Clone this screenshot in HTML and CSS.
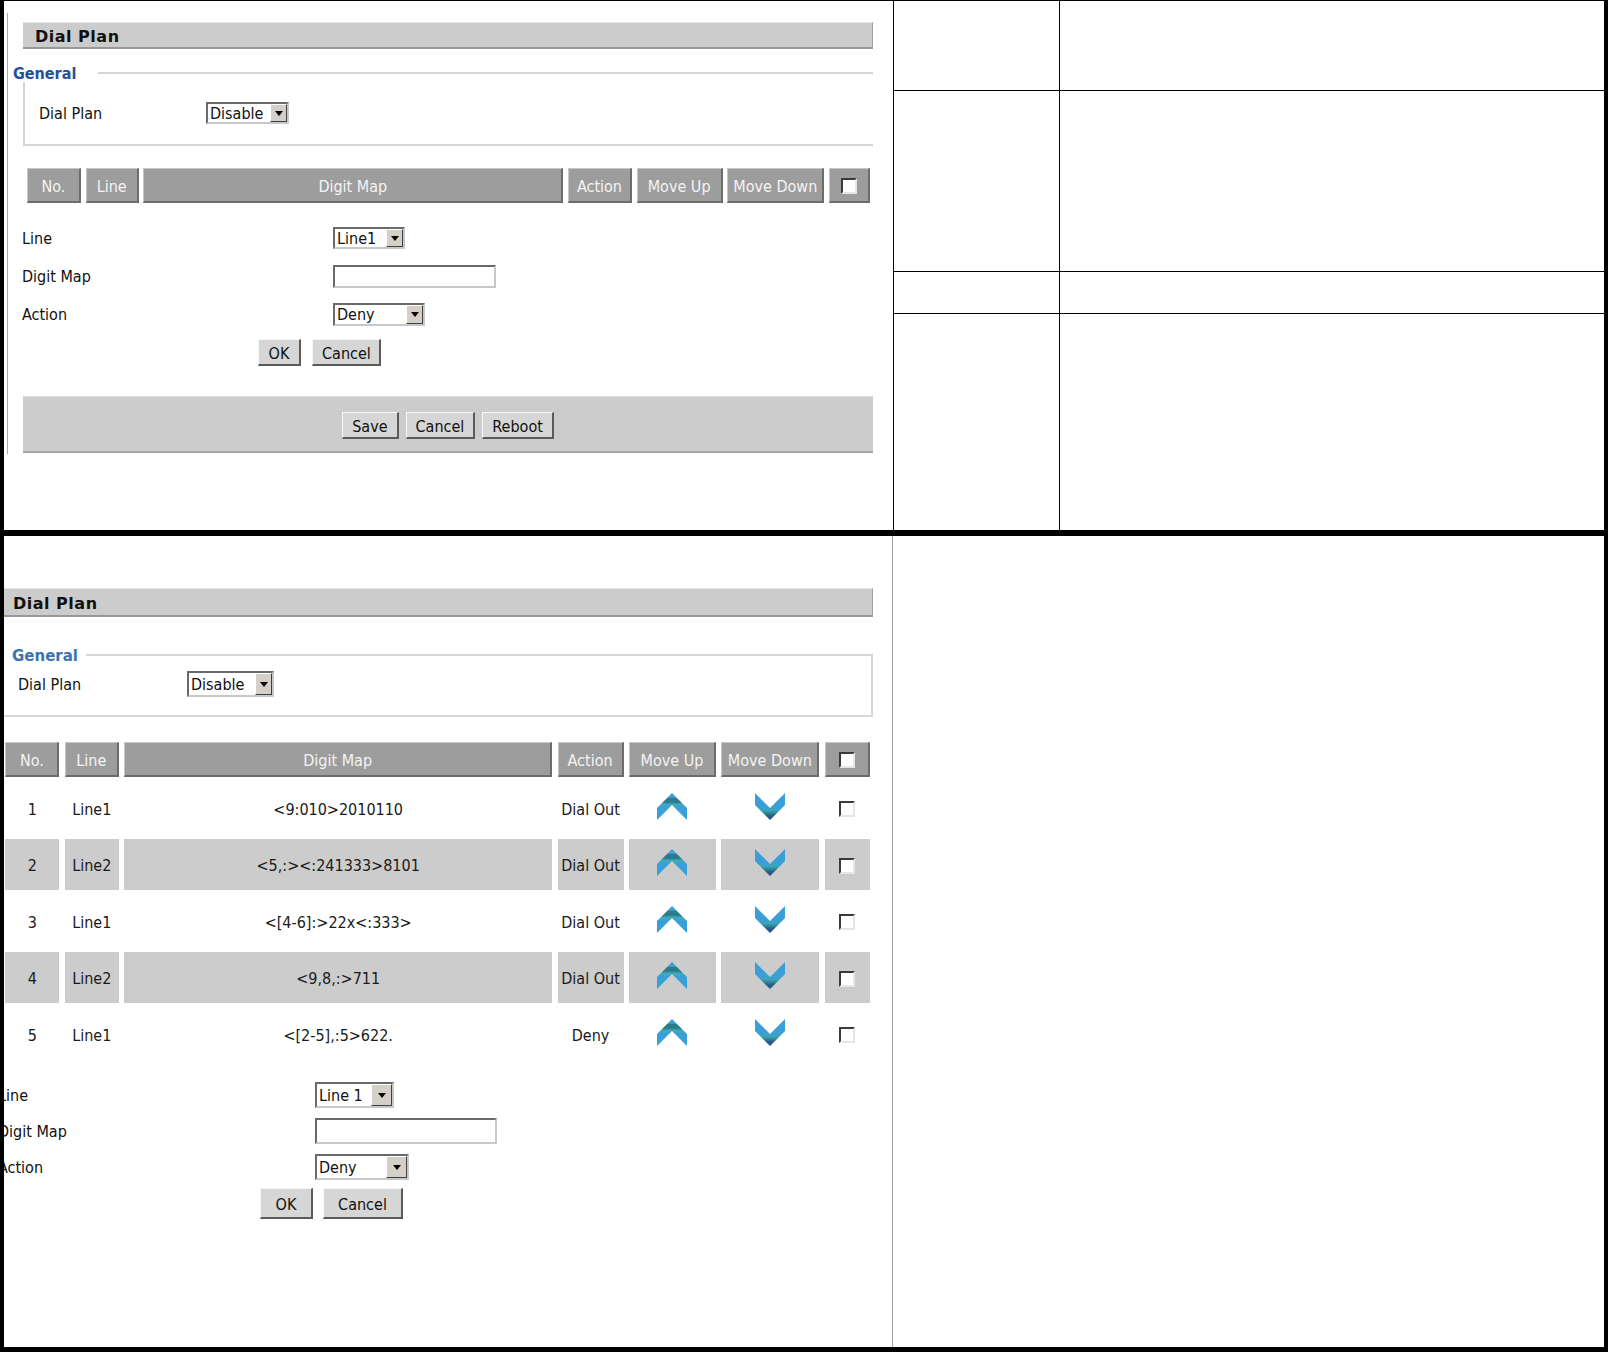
FILE: index.html
```html
<!DOCTYPE html>
<html>

<head>
    <title>Dial Plan</title>
    <link rel="stylesheet" href="styles.css">
</head>

<body>
    <svg class="defs" width="0" height="0">
        <defs>
            <linearGradient id="gUp" x1="0" y1="0" x2="0" y2="1">
                <stop offset="0" stop-color="#3b9fd6"/>
                <stop offset="0.16" stop-color="#3b9fd6"/>
                <stop offset="0.2" stop-color="#2a7b8c"/>
                <stop offset="0.34" stop-color="#2a7b8c"/>
                <stop offset="0.42" stop-color="#3faab8"/>
                <stop offset="0.55" stop-color="#3a9fd8"/>
                <stop offset="1" stop-color="#3a9fd8"/>
            </linearGradient>
            <linearGradient id="gDown" x1="0" y1="0" x2="0" y2="1">
                <stop offset="0" stop-color="#3a9fd8"/>
                <stop offset="0.55" stop-color="#3a9fd8"/>
                <stop offset="0.64" stop-color="#3aa6b6"/>
                <stop offset="0.74" stop-color="#2e8a92"/>
                <stop offset="0.84" stop-color="#2a5b8e"/>
                <stop offset="1" stop-color="#2a4f82"/>
            </linearGradient>
            <symbol id="up" viewBox="0 0 30 27">
                <polygon points="15,0 30,15 30,27 15,12 0,27 0,15" fill="url(#gUp)"/>
            </symbol>
            <symbol id="down" viewBox="0 0 30 27">
                <polygon points="0,0 15,15 30,0 30,12 15,27 0,12" fill="url(#gDown)"/>
            </symbol>
        </defs>
    </svg>

    <div class="sheet">
        <div class="part part-top">
            <div class="main">
                <div class="frame">
                    <div class="bar">Dial Plan</div>

                    <div class="legend"><span>General</span><i></i></div>
                    <div class="gbody">
                        <label class="lbl-plan">Dial Plan</label>
                        <span class="select s-disable"><span class="val">Disable</span><span class="arr"></span></span>
                    </div>

                    <div class="thead thead-top">
                        <div class="th">No.</div>
                        <div class="th">Line</div>
                        <div class="th">Digit Map</div>
                        <div class="th">Action</div>
                        <div class="th">Move Up</div>
                        <div class="th">Move Down</div>
                        <div class="th"><span class="chk"></span></div>
                    </div>

                    <div class="form form-top">
                        <div class="frow">
                            <label>Line</label>
                            <span class="select s-line1"><span class="val">Line1</span><span class="arr"></span></span>
                        </div>
                        <div class="frow">
                            <label>Digit Map</label>
                            <input type="text" class="text t-top">
                        </div>
                        <div class="frow">
                            <label>Action</label>
                            <span class="select s-deny"><span class="val">Deny</span><span class="arr"></span></span>
                        </div>
                        <div class="btns">
                            <button class="btn b-ok">OK</button>
                            <button class="btn b-cancel">Cancel</button>
                        </div>
                    </div>

                    <div class="actions">
                        <button class="btn">Save</button>
                        <button class="btn">Cancel</button>
                        <button class="btn">Reboot</button>
                    </div>
                </div>
            </div>
            <div class="notes">
                <div></div><div></div>
                <div></div><div></div>
                <div></div><div></div>
                <div></div><div></div>
            </div>
        </div>

        <div class="part part-bottom">
            <div class="main">
                <div class="inner">
                    <div class="bar bar-b">Dial Plan</div>

                    <div class="legend legend-b"><span>General</span><i></i></div>
                    <div class="gbody gbody-b">
                        <label class="lbl-plan">Dial Plan</label>
                        <span class="select s-disable-b"><span class="val">Disable</span><span class="arr"></span></span>
                    </div>

                    <div class="tbl">
                        <div class="tr thead">
                            <div class="th">No.</div>
                            <div class="th">Line</div>
                            <div class="th">Digit Map</div>
                            <div class="th">Action</div>
                            <div class="th">Move Up</div>
                            <div class="th">Move Down</div>
                            <div class="th"><span class="chk"></span></div>
                        </div>
                        <div class="tr">
                            <div class="td">1</div>
                            <div class="td">Line1</div>
                            <div class="td">&lt;9:010&gt;2010110</div>
                            <div class="td">Dial Out</div>
                            <div class="td"><svg class="mv"><use href="#up"/></svg></div>
                            <div class="td"><svg class="mv"><use href="#down"/></svg></div>
                            <div class="td"><span class="chk"></span></div>
                        </div>
                        <div class="tr alt">
                            <div class="td">2</div>
                            <div class="td">Line2</div>
                            <div class="td">&lt;5,:&gt;&lt;:241333&gt;8101</div>
                            <div class="td">Dial Out</div>
                            <div class="td"><svg class="mv"><use href="#up"/></svg></div>
                            <div class="td"><svg class="mv"><use href="#down"/></svg></div>
                            <div class="td"><span class="chk"></span></div>
                        </div>
                        <div class="tr">
                            <div class="td">3</div>
                            <div class="td">Line1</div>
                            <div class="td">&lt;[4-6]:&gt;22x&lt;:333&gt;</div>
                            <div class="td">Dial Out</div>
                            <div class="td"><svg class="mv"><use href="#up"/></svg></div>
                            <div class="td"><svg class="mv"><use href="#down"/></svg></div>
                            <div class="td"><span class="chk"></span></div>
                        </div>
                        <div class="tr alt">
                            <div class="td">4</div>
                            <div class="td">Line2</div>
                            <div class="td">&lt;9,8,:&gt;711</div>
                            <div class="td">Dial Out</div>
                            <div class="td"><svg class="mv"><use href="#up"/></svg></div>
                            <div class="td"><svg class="mv"><use href="#down"/></svg></div>
                            <div class="td"><span class="chk"></span></div>
                        </div>
                        <div class="tr">
                            <div class="td">5</div>
                            <div class="td">Line1</div>
                            <div class="td">&lt;[2-5],:5&gt;622.</div>
                            <div class="td">Deny</div>
                            <div class="td"><svg class="mv"><use href="#up"/></svg></div>
                            <div class="td"><svg class="mv"><use href="#down"/></svg></div>
                            <div class="td"><span class="chk"></span></div>
                        </div>
                    </div>

                    <div class="form form-b">
                        <div class="frow">
                            <label>Line</label>
                            <span class="select s-line1-b"><span class="val">Line 1</span><span class="arr"></span></span>
                        </div>
                        <div class="frow">
                            <label>Digit Map</label>
                            <input type="text" class="text t-b">
                        </div>
                        <div class="frow">
                            <label>Action</label>
                            <span class="select s-deny-b"><span class="val">Deny</span><span class="arr"></span></span>
                        </div>
                        <div class="btns">
                            <button class="btn b-ok">OK</button>
                            <button class="btn b-cancel">Cancel</button>
                        </div>
                    </div>
                </div>
            </div>
            <div class="side"></div>
        </div>
    </div>
</body>

</html>
```

FILE: styles.css
```css
* {
    margin: 0;
    padding: 0;
    box-sizing: border-box;
}

body {
    font-family: "DejaVu Sans Condensed", "DejaVu Sans", Tahoma, sans-serif;
    font-size: 16px;
    color: #111;
    background: #fff;
}

.defs {
    display: block;
    width: 0;
    height: 0;
    overflow: hidden;
}

.sheet {
    width: 1608px;
    height: 1352px;
}

.part {
    display: grid;
    border-left: 4px solid #000;
    border-right: 4px solid #000;
}

.part-top {
    height: 536px;
    border-top: 1px solid #000;
    border-bottom: 6px solid #000;
    grid-template-columns: 889px 1fr;
}

.part-bottom {
    height: 816px;
    border-bottom: 5px solid #000;
    grid-template-columns: 888px 1fr;
}

.main {
    overflow: hidden;
}

/* right hand notes table */
.notes {
    border-left: 1px solid #000;
    display: grid;
    grid-template-columns: 166px 1fr;
    grid-template-rows: 90px 181px 42px 1fr;
}

.notes div {
    border-bottom: 1px solid #000;
}

.notes div:nth-child(odd) {
    border-right: 1px solid #000;
}

.notes div:nth-last-child(-n+2) {
    border-bottom: 0;
}

.side {
    border-left: 1px solid #a0a0a0;
}

/* top screen */
.frame {
    margin: 12px 0 0 3px;
    width: 870px;
    border-left: 1px solid #a8a8a8;
    padding: 9px 0 1px 0;
}

.bar {
    margin-left: 15px;
    width: 850px;
    height: 27px;
    background: #ccc;
    border-top: 1px solid #e2e2e2;
    border-right: 1px solid #a0a0a0;
    border-bottom: 2px solid #979797;
    padding-left: 12px;
    font-family: "DejaVu Sans", Verdana, sans-serif;
    font-weight: bold;
    font-size: 16px;
    letter-spacing: 0.5px;
    line-height: 27px;
    color: #111;
}

.legend {
    display: flex;
    margin: 17px 0 0 5px;
    height: 16px;
}

.legend span {
    width: 85px;
    font-weight: bold;
    font-size: 16px;
    line-height: 16px;
    color: #24509c;
}

.legend i {
    flex: 1;
    margin: 6px 4px 0 0;
    border-top: 2px solid #d6d6d6;
}

.gbody {
    display: flex;
    align-items: center;
    margin-left: 15px;
    width: 850px;
    border-left: 2px solid #d6d6d6;
    border-bottom: 2px solid #d6d6d6;
    padding: 20px 0 20px 14px;
}

.lbl-plan {
    width: 167px;
}

.thead {
    height: 35px;
}

.thead-top {
    display: grid;
    grid-template-columns: 54px 53px 420px 64px 86px 97px 41px;
    column-gap: 4.67px;
    margin: 22px 0 0 19px;
}

.th {
    display: flex;
    align-items: center;
    justify-content: center;
    padding-top: 2px;
    background: #9d9d9d;
    border-top: 1px solid #c6c6c6;
    border-left: 1px solid #c6c6c6;
    border-right: 2px solid #6c6c6c;
    border-bottom: 2px solid #6c6c6c;
    color: #f4f4f4;
    white-space: nowrap;
}

.form-top {
    margin: 16px 0 0 14px;
}

.frow {
    display: flex;
    align-items: center;
    height: 38px;
}

.form-top .frow label {
    width: 311px;
}

.btns {
    display: flex;
    gap: 11px;
}

.form-top .btns {
    margin: 6px 0 0 236px;
}

.btn {
    height: 27px;
    padding: 2px 9px 0;
    background: #d6d6d6;
    border-style: solid;
    border-width: 1px 2px 2px 1px;
    border-color: #f6f6f6 #5a5a5a #5a5a5a #f6f6f6;
    font-family: inherit;
    font-size: 16px;
    color: #111;
}

.b-ok {
    width: 43px;
}

.b-cancel {
    width: 69px;
}

.actions {
    display: flex;
    justify-content: center;
    align-items: center;
    gap: 7px;
    margin: 30px 0 0 15px;
    width: 850px;
    height: 57px;
    padding-top: 3px;
    background: #ccc;
    border-top: 1px solid #dedede;
    border-bottom: 2px solid #a8a8a8;
}

/* form controls */
.select {
    display: inline-flex;
    background: #fff;
    border: 2px solid;
    border-color: #6a6a6a #c8c8c8 #c8c8c8 #6a6a6a;
}

.select .val {
    flex: 1;
    padding: 1px 0 0 2px;
    display: flex;
    align-items: center;
    white-space: nowrap;
    color: #111;
}

.select .arr {
    width: 17px;
    display: flex;
    align-items: center;
    justify-content: center;
    background: #d4d0c8;
    border: 1px solid;
    border-color: #fff #404040 #404040 #fff;
}

.select .arr::after {
    content: "";
    border-left: 4.5px solid transparent;
    border-right: 4.5px solid transparent;
    border-top: 5px solid #000;
}

.s-disable {
    width: 83px;
    height: 22px;
}

.s-line1 {
    width: 72px;
    height: 22px;
}

.s-deny {
    width: 92px;
    height: 23px;
}

.text {
    background: #fff;
    border: 2px solid;
    border-color: #6a6a6a #c8c8c8 #c8c8c8 #6a6a6a;
    outline: none;
}

.t-top {
    width: 163px;
    height: 23px;
}

.chk {
    display: block;
    width: 16px;
    height: 16px;
    background: #fff;
    border: 2px solid;
    border-color: #3a3a3a #e6e6e6 #e6e6e6 #3a3a3a;
}

/* bottom screen */
.inner {
    margin-left: -4px;
    width: 892px;
}

.bar-b {
    margin: 52px 0 0 0;
    width: 873px;
    height: 29px;
    padding-left: 13px;
    line-height: 29px;
}

.legend-b {
    margin: 31px 0 0 12px;
}

.legend-b span {
    width: 74px;
    font-family: "DejaVu Sans", Verdana, sans-serif;
    font-size: 15px;
    color: #3d72ad;
}

.legend-b i {
    margin: 6px 19px 0 0;
    height: 10px;
    border-right: 2px solid #d6d6d6;
}

.gbody-b {
    margin-left: 4px;
    width: 869px;
    border-left: 0;
    border-right: 2px solid #d6d6d6;
    padding: 7px 0 18px 14px;
}

.gbody-b .lbl-plan {
    width: 169px;
}

.s-disable-b {
    width: 87px;
    height: 26px;
}

.tbl {
    display: flex;
    flex-direction: column;
    gap: 5.5px;
    margin-top: 25px;
    padding-left: 5.4px;
}

.tr {
    display: grid;
    grid-template-columns: 54px 54px 428px 66px 87px 98px 45px;
    column-gap: 5.4px;
    height: 51px;
}

.tr.thead {
    height: 35px;
}

.td {
    display: flex;
    align-items: center;
    justify-content: center;
    padding-top: 2px;
    white-space: nowrap;
    color: #1a1a1a;
}

.tr.alt .td {
    background: #ccc;
}

.mv {
    width: 30px;
    height: 27px;
    margin-bottom: 6px;
}

.form-b {
    margin: 17.5px 0 0 -2px;
}

.form-b .frow {
    height: 36px;
}

.form-b .frow label {
    width: 317px;
}

.s-line1-b {
    width: 79px;
    height: 26px;
}

.s-line1-b .arr,
.s-deny-b .arr {
    width: 21px;
}

.s-deny-b {
    width: 94px;
    height: 26px;
}

.t-b {
    width: 182px;
    height: 26px;
}

.form-b .btns {
    margin: 3px 0 0 262px;
    gap: 10px;
}

.form-b .btn {
    height: 31px;
}

.form-b .b-ok {
    width: 53px;
}

.form-b .b-cancel {
    width: 80px;
}
```
